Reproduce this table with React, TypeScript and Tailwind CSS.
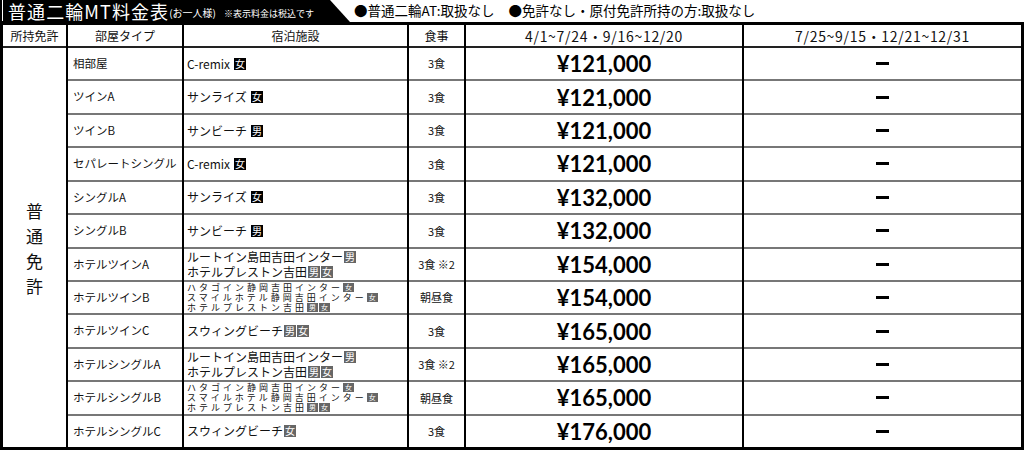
import React from "react";

type Line = { text: string; badges: string[] };
type Row = {
    room: string;
    lines: Line[];
    meal: string;
    price: string;
    dark?: boolean;
};

const rows: Row[] = [
    { room: "相部屋", lines: [{ text: "C-remix", badges: ["女"] }], meal: "3食", price: "¥121,000", dark: true },
    { room: "ツインA", lines: [{ text: "サンライズ", badges: ["女"] }], meal: "3食", price: "¥121,000", dark: true },
    { room: "ツインB", lines: [{ text: "サンビーチ", badges: ["男"] }], meal: "3食", price: "¥121,000", dark: true },
    { room: "セパレートシングル", lines: [{ text: "C-remix", badges: ["女"] }], meal: "3食", price: "¥121,000", dark: true },
    { room: "シングルA", lines: [{ text: "サンライズ", badges: ["女"] }], meal: "3食", price: "¥132,000", dark: true },
    { room: "シングルB", lines: [{ text: "サンビーチ", badges: ["男"] }], meal: "3食", price: "¥132,000", dark: true },
    {
        room: "ホテルツインA",
        lines: [
            { text: "ルートイン島田吉田インター", badges: ["男"] },
            { text: "ホテルプレストン吉田", badges: ["男", "女"] },
        ],
        meal: "3食 ※2",
        price: "¥154,000",
    },
    {
        room: "ホテルツインB",
        lines: [
            { text: "ハタゴイン静岡吉田インター", badges: ["女"] },
            { text: "スマイルホテル静岡吉田インター", badges: ["女"] },
            { text: "ホテルプレストン吉田", badges: ["男", "女"] },
        ],
        meal: "朝昼食",
        price: "¥154,000",
    },
    { room: "ホテルツインC", lines: [{ text: "スウィングビーチ", badges: ["男", "女"] }], meal: "3食", price: "¥165,000" },
    {
        room: "ホテルシングルA",
        lines: [
            { text: "ルートイン島田吉田インター", badges: ["男"] },
            { text: "ホテルプレストン吉田", badges: ["男", "女"] },
        ],
        meal: "3食 ※2",
        price: "¥165,000",
    },
    {
        room: "ホテルシングルB",
        lines: [
            { text: "ハタゴイン静岡吉田インター", badges: ["女"] },
            { text: "スマイルホテル静岡吉田インター", badges: ["女"] },
            { text: "ホテルプレストン吉田", badges: ["男", "女"] },
        ],
        meal: "朝昼食",
        price: "¥165,000",
    },
    { room: "ホテルシングルC", lines: [{ text: "スウィングビーチ", badges: ["女"] }], meal: "3食", price: "¥176,000" },
];

const jp = "font-['Noto_Sans_CJK_JP','Noto_Sans',sans-serif]";

function Mark({ label, dark, small }: { label: string; dark?: boolean; small?: boolean }) {
    return (
        <span
            className={
                "inline-flex items-center justify-center text-white " +
                (dark ? "bg-black " : "bg-[#666] ") +
                (small ? "h-[9px] w-[11px] text-[7px] leading-none tracking-normal" : "h-[12px] w-[12px] text-[10px] leading-none")
            }
        >
            {label}
        </span>
    );
}

function Facility({ row }: { row: Row }) {
    if (row.lines.length === 3) {
        return (
            <div className="flex flex-col text-[9px] leading-[10px] tracking-[3px] text-[#111]">
                {row.lines.map((l) => (
                    <div key={l.text} className="flex h-[10px] items-center">
                        <span>{l.text}</span>
                        <span className="flex gap-[1px]">
                            {l.badges.map((b, i) => (
                                <Mark key={i} label={b} small />
                            ))}
                        </span>
                    </div>
                ))}
            </div>
        );
    }
    if (row.lines.length === 2) {
        return (
            <div className="flex flex-col gap-[2px] text-[12px] leading-[13px] text-[#111]">
                {row.lines.map((l) => (
                    <div key={l.text} className="flex items-center gap-[1px]">
                        <span>{l.text}</span>
                        <span className="flex gap-[1px]">
                            {l.badges.map((b, i) => (
                                <Mark key={i} label={b} />
                            ))}
                        </span>
                    </div>
                ))}
            </div>
        );
    }
    const l = row.lines[0];
    return (
        <div className={"flex items-center text-[12px] text-[#111] " + (row.dark ? "gap-[4px]" : "gap-[1px]")}>
            <span>{l.text}</span>
            <span className="flex gap-[1px]">
                {l.badges.map((b, i) => (
                    <Mark key={i} label={b} dark={row.dark} />
                ))}
            </span>
        </div>
    );
}

const heads = [
    { t: "所持免許", c: "text-[12px]" },
    { t: "部屋タイプ", c: "text-[12px]" },
    { t: "宿泊施設", c: "text-[12px]" },
    { t: "食事", c: "text-[12px]" },
    { t: "4/1~7/24・9/16~12/20", c: "text-[14px] tracking-[0.05em]" },
    { t: "7/25~9/15・12/21~12/31", c: "text-[14px] tracking-[0.05em]" },
];

export default function App() {
    return (
        <div className={"h-[450px] w-[1024px] overflow-hidden bg-white " + jp}>
            {/* title strip */}
            <div className="flex h-[22px] items-stretch">
                <div className="relative flex h-[22px] w-[330px] items-center bg-black pl-[8px] text-white">
                    <div className="absolute left-[2px] top-0 h-[21px] w-[1px] bg-white" />
                    <span className="text-[18px] leading-[22px] tracking-[0.06em]">普通二輪MT料金表</span>
                    <span className="mt-[4px] text-[10px] leading-none">(お一人様)</span>
                    <span className="ml-[8px] mt-[4px] text-[9px] leading-none">※表示料金は税込です</span>
                </div>
                <svg width="20" height="22" viewBox="0 0 20 22" className="block">
                    <polygon points="0,0 20,22 0,22" fill="#000" />
                </svg>
                <div className="flex items-center pl-[4px] text-[13.5px] leading-none text-black">
                    <span>●普通二輪AT:取扱なし</span>
                    <span className="ml-[14px]">●免許なし・原付免許所持の方:取扱なし</span>
                </div>
            </div>

            {/* table */}
            <div className="h-[428px] border-[3px] border-black">
                <div className="grid h-full grid-cols-[63px_114px_223px_55px_276px_277px] grid-rows-[21px_repeat(12,minmax(0,1fr))] gap-x-[2px] bg-black text-[#111]">
                    {heads.map((h) => (
                        <div key={h.t} className={"flex items-center justify-center bg-white leading-none " + h.c}>
                            {h.t}
                        </div>
                    ))}

                    <div className="col-start-1 row-span-12 row-start-2 flex flex-col items-center justify-center border-t-2 border-[#222] bg-white text-[17px] leading-[25px]">
                        <span>普</span>
                        <span>通</span>
                        <span>免</span>
                        <span>許</span>
                    </div>

                    {rows.map((r, i) => {
                        const line = i === 0 ? "border-[#222]" : "border-[#777]";
                        return (
                            <React.Fragment key={r.room}>
                                <div className={"flex items-center border-t-2 bg-white pl-[5px] text-[11.5px] " + line}>
                                    {r.room}
                                </div>
                                <div className={"flex items-center border-t-2 bg-white pl-[3px] " + line}>
                                    <Facility row={r} />
                                </div>
                                <div className={"flex items-center justify-center border-t-2 bg-white text-[11px] " + line}>
                                    {r.meal}
                                </div>
                                <div className={"flex items-center justify-center border-t-2 bg-white pt-[1px] font-['Lato',sans-serif] text-[22px] font-bold leading-none text-black " + line}>
                                    {r.price}
                                </div>
                                <div className={"flex items-center justify-center border-t-2 bg-white " + line}>
                                    <div className="h-[3px] w-[13px] bg-black" />
                                </div>
                            </React.Fragment>
                        );
                    })}
                </div>
            </div>
        </div>
    );
}
